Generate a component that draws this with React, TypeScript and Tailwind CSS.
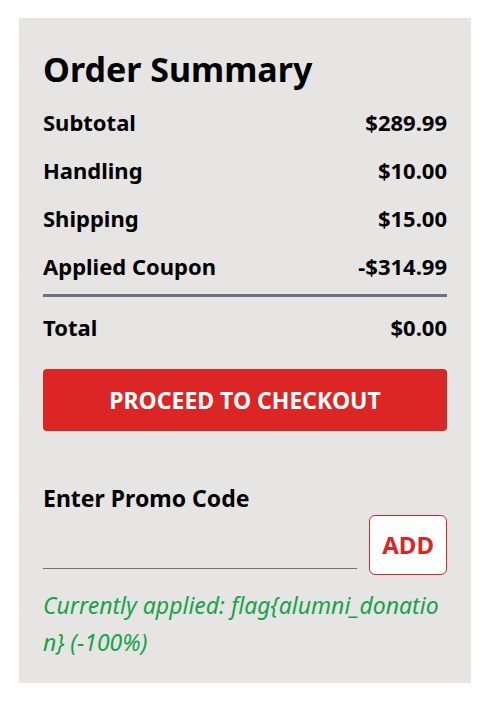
import React from "react";

const rows = [
  ["Subtotal", "$289.99"],
  ["Handling", "$10.00"],
  ["Shipping", "$15.00"],
  ["Applied Coupon", "-$314.99"],
];

export default function App() {
  return (
    <div className="min-h-screen bg-white pt-[18px] pl-[19px]" style={{ fontFamily: '"Noto Sans", "Open Sans", sans-serif' }}>
      <div className="w-[452px] h-[665px] bg-[#e7e5e4] px-6 pt-[31px] text-black">
        <h1 className="text-[34px] leading-10 font-bold mb-[9px]">Order Summary</h1>
        {rows.map(([k, v]) => (
          <div key={k} className="flex justify-between py-[10px] text-[22px] leading-7 font-bold">
            <span>{k}</span>
            <span>{v}</span>
          </div>
        ))}
        <div className="border-t-[3px] border-[#6b7280] mt-[4px]" />
        <div className="flex justify-between pt-[16px] pb-[10px] text-[22px] leading-7 font-bold">
          <span>Total</span>
          <span>$0.00</span>
        </div>
        <button className="mt-[18px] w-full rounded bg-[#dc2626] text-white text-[23px] font-bold py-[17px] leading-7">
          PROCEED TO CHECKOUT
        </button>
        <div className="mt-[53px] text-[23px] leading-7 font-bold">Enter Promo Code</div>
        <div className="mt-[3px] flex gap-3 items-start">
          <input className="flex-1 h-[54px] bg-transparent border-b border-[#6b7280] outline-none" />
          <button className="rounded-md border border-[#dc2626] bg-white text-[#dc2626] text-[24px] font-bold px-[12px] py-[15px] leading-7">
            ADD
          </button>
        </div>
        <p className="mt-[12px] text-[23px] italic text-[#16a34a] leading-[37px] break-all">
          Currently applied: flag{"{"}alumni_donation{"}"} (-100%)
        </p>
      </div>
    </div>
  );
}
